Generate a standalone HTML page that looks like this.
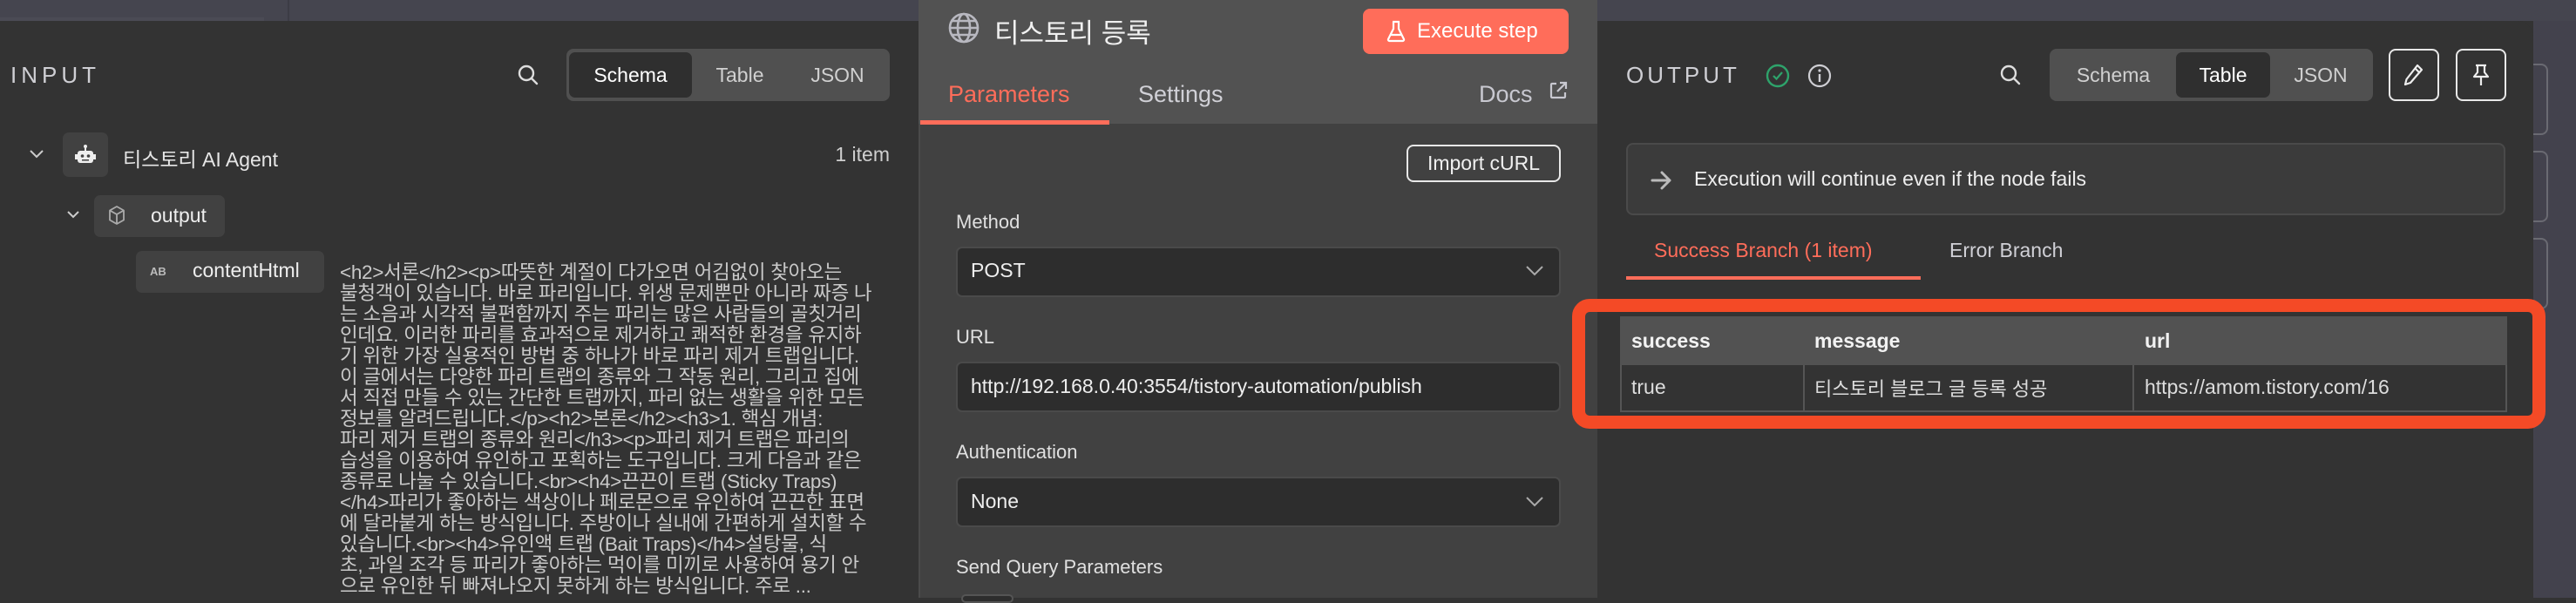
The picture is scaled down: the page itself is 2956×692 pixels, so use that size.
<!DOCTYPE html>
<html><head><meta charset="utf-8">
<style>
*{margin:0;padding:0;box-sizing:border-box}
body{width:2956px;height:686px;overflow:hidden;background:#333;font-family:"Liberation Sans","Noto Sans CJK KR",sans-serif;color:#ddd;position:relative}
.a{position:absolute}
.t{white-space:nowrap}
.seg{background:#505050;border-radius:8px}
.segact{background:#2f2f2f;border-radius:7px}
.btnb{border:2px solid #e8e8e8;border-radius:8px}
.inp{background:#2d2d2d;border:2px solid #4a4a4a;border-radius:7px}
.lbl{font-size:22px;color:#e0e0e0}
</style></head><body>
<div class="a" style="left:0;top:0;width:2956px;height:24px;background:#45454f"></div>
<div class="a" style="left:330px;top:0;width:2px;height:24px;background:#3c3c45"></div>
<div class="a" style="left:0;top:20px;width:303px;height:4px;background:#4b4b55"></div>

<div class="a" style="left:0;top:24px;width:1054px;height:662px;background:#333"></div>
<div class="a t" style="left:12px;top:71px;font-size:26px;letter-spacing:5px;color:#cfcfd4">INPUT</div>
<svg class="a" style="left:593px;top:73px" width="26" height="26" viewBox="0 0 26 26"><circle cx="11" cy="11" r="8" fill="none" stroke="#ddd" stroke-width="2.4"/><path d="M17 17l6 6" stroke="#ddd" stroke-width="2.4" stroke-linecap="round"/></svg>
<div class="a seg" style="left:650px;top:56px;width:371px;height:60px"></div>
<div class="a segact" style="left:653px;top:60px;width:141px;height:52px"></div>
<div class="a t" style="left:653px;top:73px;width:141px;text-align:center;font-size:23px;color:#fff">Schema</div>
<div class="a t" style="left:800px;top:73px;width:98px;text-align:center;font-size:23px;color:#d0d0d0">Table</div>
<div class="a t" style="left:910px;top:73px;width:102px;text-align:center;font-size:23px;color:#d0d0d0">JSON</div>

<svg class="a" style="left:33px;top:170px" width="18" height="14" viewBox="0 0 18 14"><path d="M2 3l7 7 7-7" fill="none" stroke="#ccc" stroke-width="2"/></svg>
<div class="a" style="left:72px;top:152px;width:52px;height:51px;background:#414141;border-radius:7px"></div>
<svg class="a" style="left:85px;top:164px" width="26" height="26" viewBox="0 0 26 26"><rect x="4" y="9" width="18" height="14" rx="3" fill="#eee"/><circle cx="13" cy="4" r="2" fill="#eee"/><rect x="12" y="5" width="2" height="4" fill="#eee"/><circle cx="9.5" cy="15" r="1.8" fill="#414141"/><circle cx="16.5" cy="15" r="1.8" fill="#414141"/><rect x="9" y="19" width="8" height="1.5" fill="#414141"/><rect x="1" y="13" width="3" height="6" fill="#eee"/><rect x="22" y="13" width="3" height="6" fill="#eee"/></svg>
<div class="a t" style="left:141px;top:164px;font-size:23px;color:#e6e6e6">티스토리 AI Agent</div>
<div class="a t" style="left:900px;top:164px;width:121px;text-align:right;font-size:23px;color:#cfcfcf">1 item</div>

<svg class="a" style="left:76px;top:241px" width="16" height="12" viewBox="0 0 16 12"><path d="M2 2l6 6 6-6" fill="none" stroke="#ccc" stroke-width="2"/></svg>
<div class="a" style="left:108px;top:224px;width:150px;height:48px;background:#414141;border-radius:7px"></div>
<svg class="a" style="left:123px;top:235px" width="22" height="26" viewBox="0 0 22 26"><path d="M11 2l8 4.5v11L11 22l-8-4.5v-11z M3 6.5l8 4.5 8-4.5 M11 11v11" fill="none" stroke="#aaa" stroke-width="1.8" stroke-linejoin="round"/></svg>
<div class="a t" style="left:173px;top:234px;font-size:23px;color:#eee">output</div>

<div class="a" style="left:156px;top:288px;width:216px;height:48px;background:#414141;border-radius:7px"></div>
<div class="a t" style="left:172px;top:304px;font-size:13px;color:#bbb;font-weight:bold">AB</div>
<div class="a t" style="left:221px;top:297px;font-size:23px;color:#eee">contentHtml</div>

<div class="a" style="left:390px;top:301px;font-size:22.5px;line-height:24px;color:#c9c9c9;white-space:nowrap;letter-spacing:-0.3px">
&lt;h2&gt;서론&lt;/h2&gt;&lt;p&gt;따뜻한 계절이 다가오면 어김없이 찾아오는<br>
불청객이 있습니다. 바로 파리입니다. 위생 문제뿐만 아니라 짜증 나<br>
는 소음과 시각적 불편함까지 주는 파리는 많은 사람들의 골칫거리<br>
인데요. 이러한 파리를 효과적으로 제거하고 쾌적한 환경을 유지하<br>
기 위한 가장 실용적인 방법 중 하나가 바로 파리 제거 트랩입니다.<br>
이 글에서는 다양한 파리 트랩의 종류와 그 작동 원리, 그리고 집에<br>
서 직접 만들 수 있는 간단한 트랩까지, 파리 없는 생활을 위한 모든<br>
정보를 알려드립니다.&lt;/p&gt;&lt;h2&gt;본론&lt;/h2&gt;&lt;h3&gt;1. 핵심 개념:<br>
파리 제거 트랩의 종류와 원리&lt;/h3&gt;&lt;p&gt;파리 제거 트랩은 파리의<br>
습성을 이용하여 유인하고 포획하는 도구입니다. 크게 다음과 같은<br>
종류로 나눌 수 있습니다.&lt;br&gt;&lt;h4&gt;끈끈이 트랩 (Sticky Traps)<br>
&lt;/h4&gt;파리가 좋아하는 색상이나 페로몬으로 유인하여 끈끈한 표면<br>
에 달라붙게 하는 방식입니다. 주방이나 실내에 간편하게 설치할 수<br>
있습니다.&lt;br&gt;&lt;h4&gt;유인액 트랩 (Bait Traps)&lt;/h4&gt;설탕물, 식<br>
초, 과일 조각 등 파리가 좋아하는 먹이를 미끼로 사용하여 용기 안<br>
으로 유인한 뒤 빠져나오지 못하게 하는 방식입니다. 주로 ...
</div>

<div class="a" style="left:1054px;top:0;width:779px;height:686px;background:#414141;border-left:2px solid #4a4a4a"></div>
<div class="a" style="left:1054px;top:0;width:779px;height:142px;background:#525252"></div>
<svg class="a" style="left:1087px;top:13px" width="38" height="38" viewBox="0 0 38 38"><g fill="none" stroke="#b8b8c0" stroke-width="2.6"><circle cx="19" cy="19" r="16"/><ellipse cx="19" cy="19" rx="7" ry="16"/><path d="M3 19h32M5 11h28M5 27h28"/></g></svg>
<div class="a t" style="left:1141px;top:13px;font-size:31px;color:#f0f0f0">티스토리 등록</div>
<div class="a" style="left:1564px;top:10px;width:236px;height:52px;background:#ff6d5a;border-radius:8px"></div>
<svg class="a" style="left:1590px;top:23px" width="24" height="26" viewBox="0 0 24 26"><path d="M8 2h8M9 2v8L3 22a1.5 1.5 0 0 0 1.3 2h15.4A1.5 1.5 0 0 0 21 22L15 10V2M6 17h12" fill="none" stroke="#fff" stroke-width="2.2" stroke-linejoin="round"/></svg>
<div class="a t" style="left:1626px;top:22px;font-size:24px;color:#fff">Execute step</div>
<div class="a t" style="left:1088px;top:93px;font-size:27px;color:#ff6d5a">Parameters</div>
<div class="a t" style="left:1306px;top:93px;font-size:27px;color:#d0d0d6">Settings</div>
<div class="a t" style="left:1697px;top:93px;font-size:27px;color:#c8c8d0">Docs</div>
<svg class="a" style="left:1777px;top:93px" width="22" height="22" viewBox="0 0 22 22"><path d="M9 3H4a1 1 0 0 0-1 1v14a1 1 0 0 0 1 1h14a1 1 0 0 0 1-1v-5M13 2h7v7M20 2L10 12" fill="none" stroke="#c8c8d0" stroke-width="2.2"/></svg>
<div class="a" style="left:1056px;top:138px;width:217px;height:5px;background:#ff6d5a"></div>

<div class="a btnb" style="left:1614px;top:166px;width:177px;height:43px"></div>
<div class="a t" style="left:1614px;top:174px;width:177px;text-align:center;font-size:23px;color:#f0f0f0">Import cURL</div>
<div class="a t lbl" style="left:1097px;top:242px">Method</div>
<div class="a inp" style="left:1097px;top:283px;width:694px;height:58px"></div>
<div class="a t" style="left:1114px;top:297px;font-size:23px;color:#eee">POST</div>
<svg class="a" style="left:1750px;top:304px" width="22" height="14" viewBox="0 0 22 14"><path d="M2 2l9 9 9-9" fill="none" stroke="#aaa" stroke-width="2"/></svg>
<div class="a t lbl" style="left:1097px;top:374px">URL</div>
<div class="a inp" style="left:1097px;top:415px;width:694px;height:58px"></div>
<div class="a t" style="left:1114px;top:430px;font-size:23px;color:#eee">http://192.168.0.40:3554/tistory-automation/publish</div>
<div class="a t lbl" style="left:1097px;top:506px">Authentication</div>
<div class="a inp" style="left:1097px;top:547px;width:694px;height:58px"></div>
<div class="a t" style="left:1114px;top:562px;font-size:23px;color:#eee">None</div>
<svg class="a" style="left:1750px;top:569px" width="22" height="14" viewBox="0 0 22 14"><path d="M2 2l9 9 9-9" fill="none" stroke="#aaa" stroke-width="2"/></svg>
<div class="a t lbl" style="left:1097px;top:638px">Send Query Parameters</div>
<div class="a" style="left:1103px;top:682px;width:60px;height:10px;background:#2d2d2d;border:2px solid #555;border-radius:8px"></div>

<div class="a" style="left:2907px;top:24px;width:49px;height:662px;background:#43424d"></div>
<div class="a" style="left:2900px;top:73px;width:24px;height:82px;border:2px solid #6a6a72;border-left:none;border-radius:0 8px 8px 0"></div>
<div class="a" style="left:2900px;top:173px;width:24px;height:82px;border:2px solid #6a6a72;border-left:none;border-radius:0 8px 8px 0"></div>
<div class="a" style="left:2900px;top:273px;width:24px;height:82px;border:2px solid #6a6a72;border-left:none;border-radius:0 8px 8px 0"></div>

<div class="a" style="left:1833px;top:24px;width:1074px;height:662px;background:#333;border-top-right-radius:18px"></div>
<div class="a t" style="left:1866px;top:71px;font-size:26px;letter-spacing:4px;color:#cfcfd4">OUTPUT</div>
<svg class="a" style="left:2026px;top:72px" width="28" height="30" viewBox="0 0 28 30"><circle cx="14" cy="15" r="12" fill="none" stroke="#2ea36b" stroke-width="2.4"/><path d="M9 15l3.5 3.5L19 11" fill="none" stroke="#2ea36b" stroke-width="2.2"/></svg>
<svg class="a" style="left:2074px;top:72px" width="28" height="30" viewBox="0 0 28 30"><circle cx="14" cy="15" r="12" fill="none" stroke="#cfcfd4" stroke-width="2.2"/><path d="M14 13v9" stroke="#cfcfd4" stroke-width="2.4"/><circle cx="14" cy="9" r="1.6" fill="#cfcfd4"/></svg>
<svg class="a" style="left:2294px;top:73px" width="26" height="26" viewBox="0 0 26 26"><circle cx="11" cy="11" r="8" fill="none" stroke="#ddd" stroke-width="2.4"/><path d="M17 17l6 6" stroke="#ddd" stroke-width="2.4" stroke-linecap="round"/></svg>
<div class="a seg" style="left:2352px;top:56px;width:371px;height:60px"></div>
<div class="a segact" style="left:2497px;top:60px;width:108px;height:52px"></div>
<div class="a t" style="left:2360px;top:73px;width:130px;text-align:center;font-size:23px;color:#d0d0d0">Schema</div>
<div class="a t" style="left:2497px;top:73px;width:108px;text-align:center;font-size:23px;color:#fff">Table</div>
<div class="a t" style="left:2612px;top:73px;width:102px;text-align:center;font-size:23px;color:#d0d0d0">JSON</div>
<div class="a btnb" style="left:2741px;top:56px;width:58px;height:60px"></div>
<svg class="a" style="left:2757px;top:72px" width="26" height="28" viewBox="0 0 26 28"><path d="M17 3l5 5L9 23l-6 2 1.5-6z M14 6l5 5" fill="none" stroke="#eee" stroke-width="2.2" stroke-linejoin="round"/></svg>
<div class="a btnb" style="left:2818px;top:56px;width:58px;height:60px"></div>
<svg class="a" style="left:2834px;top:72px" width="26" height="30" viewBox="0 0 26 30"><path d="M7 3h12M9 3v8l-4 5h16l-4-5V3M13 16v10" fill="none" stroke="#eee" stroke-width="2.2" stroke-linejoin="round"/></svg>

<div class="a" style="left:1866px;top:164px;width:1009px;height:83px;background:#3b3b3b;border:2px solid #4a4a4a;border-radius:8px"></div>
<svg class="a" style="left:1893px;top:194px" width="28" height="26" viewBox="0 0 28 26"><path d="M3 13h20M14 4l9 9-9 9" fill="none" stroke="#bbb" stroke-width="3" stroke-linecap="round" stroke-linejoin="round"/></svg>
<div class="a t" style="left:1944px;top:192px;font-size:23px;color:#eee">Execution will continue even if the node fails</div>

<div class="a t" style="left:1898px;top:274px;font-size:23px;color:#ff6d5a">Success Branch (1 item)</div>
<div class="a t" style="left:2237px;top:274px;font-size:23px;color:#d0d0d6">Error Branch</div>
<div class="a" style="left:1866px;top:317px;width:338px;height:4px;background:#ff6d5a"></div>

<div class="a" style="left:1859px;top:363px;width:1018px;height:110px;background:#333;border:2px solid #555"></div>
<div class="a" style="left:1859px;top:363px;width:1018px;height:56px;background:#525252"></div>
<div class="a" style="left:2069px;top:419px;width:2px;height:54px;background:#555"></div>
<div class="a" style="left:2447px;top:419px;width:2px;height:54px;background:#555"></div>
<div class="a t" style="left:1872px;top:378px;font-size:23px;font-weight:bold;color:#f2f2f2">success</div>
<div class="a t" style="left:2082px;top:378px;font-size:23px;font-weight:bold;color:#f2f2f2">message</div>
<div class="a t" style="left:2461px;top:378px;font-size:23px;font-weight:bold;color:#f2f2f2">url</div>
<div class="a t" style="left:1872px;top:431px;font-size:23px;color:#ddd">true</div>
<div class="a t" style="left:2082px;top:429px;font-size:22px;color:#ddd">티스토리 블로그 글 등록 성공</div>
<div class="a t" style="left:2461px;top:431px;font-size:23px;color:#ddd">https://amom.tistory.com/16</div>

<div class="a" style="left:1804px;top:343px;width:1117px;height:149px;border:15px solid #f44a26;border-radius:20px"></div>
</body></html>
